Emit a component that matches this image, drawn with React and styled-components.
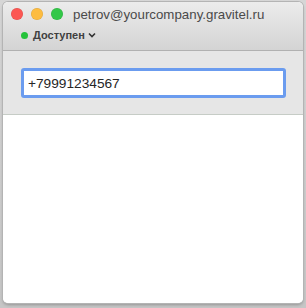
import React from "react"
import styled, { createGlobalStyle } from "styled-components"

const Global = createGlobalStyle`
  html, body {
    margin: 0;
    padding: 0;
    background: #cfcfcf;
    font-family: "Liberation Sans", Arial, sans-serif;
  }
`

const Desk = styled.div`
  width: 306px;
  height: 308px;
  padding: 2px 3px 0 3px;
  box-sizing: border-box;
  background: linear-gradient(#d6d6d6, #c6c6c6);
`

const Window = styled.div`
  width: 300px;
  height: 301px;
  border-radius: 5px;
  overflow: hidden;
  background: #fff;
  box-shadow: 0 0 0 1px #b4b4b4, 0 2px 3px rgba(0, 0, 0, 0.25);
  display: flex;
  flex-direction: column;
`

const TitleBar = styled.div`
  height: 49px;
  flex-shrink: 0;
  background: linear-gradient(#ececec, #d4d4d4);
  border-bottom: 1px solid #b1b1b1;
  padding: 4px 0 0 8px;
  box-sizing: border-box;
  display: flex;
  flex-direction: column;
  gap: 6px;
`

const TopRow = styled.div`
  display: flex;
  align-items: center;
  gap: 8px;
  height: 16px;
`

const Light = styled.span`
  width: 12px;
  height: 12px;
  border-radius: 50%;
  background: ${(p) => p.color};
  box-shadow: inset 0 0 0 0.5px rgba(0, 0, 0, 0.12);
`

const Title = styled.span`
  margin-left: 2px;
  font-size: 13.3px;
  color: #4a4a4a;
`

const Status = styled.div`
  display: flex;
  align-items: center;
  height: 14px;
  padding-left: 10px;
  font-size: 11px;
  font-weight: bold;
  color: #404040;
`

const Dot = styled.span`
  width: 7px;
  height: 7px;
  border-radius: 50%;
  background: #25c23a;
  margin-right: 5px;
`

const Panel = styled.div`
  height: 64px;
  flex-shrink: 0;
  background: #e6e6e6;
  border-bottom: 1px solid #c6ccc6;
  padding: 17px 0 0 18px;
  box-sizing: border-box;
`

const Field = styled.div`
  width: 265px;
  height: 30px;
  box-sizing: border-box;
  border: 3px solid #6b9cef;
  border-radius: 3px;
  background: #fff;
  display: flex;
  align-items: center;
  padding-left: 4px;
  font-size: 13.7px;
  color: #262626;
`

const Body = styled.div`
  flex: 1;
  background: #fff;
`

const Chevron = () => (
  <svg width="8" height="6" viewBox="0 0 8 6" style={{ marginLeft: 3 }}>
    <path d="M1 1.5 L4 4.5 L7 1.5" stroke="#333" strokeWidth="1.6" fill="none" />
  </svg>
)

export default function App() {
  return (
    <Desk>
      <Global />
      <Window>
        <TitleBar>
          <TopRow>
            <Light color="#fc5753" />
            <Light color="#fdbc40" />
            <Light color="#33c748" />
            <Title>petrov@yourcompany.gravitel.ru</Title>
          </TopRow>
          <Status>
            <Dot />
            Доступен
            <Chevron />
          </Status>
        </TitleBar>
        <Panel>
          <Field>+79991234567</Field>
        </Panel>
        <Body />
      </Window>
    </Desk>
  )
}
